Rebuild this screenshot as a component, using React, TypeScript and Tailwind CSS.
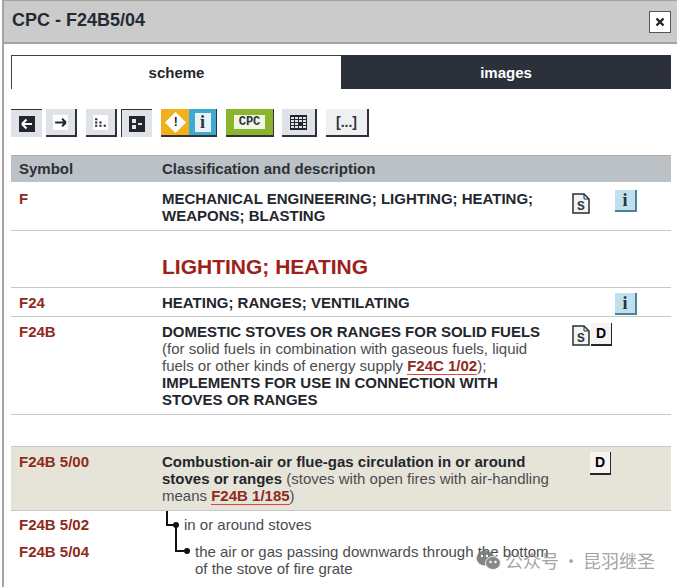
import type { ReactNode } from "react";

const Tool = ({ pressed = "", className = "", children }: { pressed?: string; className?: string; children: ReactNode }) => (
  <div className={`flex h-7 items-center justify-center bg-[#dfe2e6] ${pressed || "border-r-2 border-b-2 border-[#30343a]"} ${className}`}>
    {children}
  </div>
);

const SIcon = () => (
  <svg width="18" height="21" viewBox="0 0 18 21" className="block">
    <path d="M1 1H12L17 6V20H1Z" fill="#f2f5f5" stroke="#2b2f33" strokeWidth="1.5" />
    <path d="M12 1V6H17" fill="none" stroke="#2b2f33" />
    <text x="9" y="16.5" textAnchor="middle" fontSize="13" fontWeight="700" fill="#30343a" fontFamily="Liberation Mono, monospace">S</text>
  </svg>
);

const InfoIcon = () => (
  <div className="flex h-[22px] w-[22px] items-center justify-center border-r-2 border-b-2 border-[#4a8296] bg-[#bfe0ec] font-['Liberation_Serif',serif] text-[18px] leading-none font-bold text-[#23343f]">
    i
  </div>
);

const DIcon = () => (
  <div className="flex h-[23px] w-[21px] items-center justify-center border-r border-b-2 border-[#24272b] bg-[#f7f3f3] text-[14px] font-bold text-black">
    D
  </div>
);

const Code = ({ children }: { children: ReactNode }) => (
  <span className="border-b border-[#d9473a] font-bold text-[#8f2a20]">{children}</span>
);

const Row = ({ symbol, icons, className = "", children }: { symbol?: string; icons?: ReactNode; className?: string; children: ReactNode }) => (
  <div className={`relative flex border-b border-[#c6c8ca] ${className}`}>
    <div className="w-[151px] shrink-0 pl-2 font-bold text-[#8f2a20]">{symbol}</div>
    <div className="w-[410px] shrink-0">{children}</div>
    {icons}
  </div>
);

export default function App() {
  return (
    <div className="relative h-[587px] w-[677px] overflow-hidden bg-white font-['Liberation_Sans',sans-serif] text-[15px] leading-[17px] text-[#4a4d50]">
      <div className="ml-[2px] h-full border-t border-l-2 border-[#a3a3a3]">
        <div className="flex h-[43px] items-center justify-between border-b-2 border-[#a3a3a3] bg-[#cbcbcb] pr-[6px] pl-2">
          <h1 className="-mt-[2px] text-[18px] font-bold text-[#232a33]">CPC - F24B5/04</h1>
          <button className="flex h-[22px] w-[22px] items-center justify-center border border-[#555] bg-white">
            <svg width="10" height="10" viewBox="0 0 10 10">
              <path d="M1.5 1.5L8.5 8.5M8.5 1.5L1.5 8.5" stroke="#222" strokeWidth="2.4" />
            </svg>
          </button>
        </div>

        <div className="pt-[11px] pr-[2px] pl-[7px]">
          <div className="flex h-[34px] w-[660px] font-bold">
            <div className="flex w-[330px] items-center justify-center border-t border-l border-[#3b3f46] text-[#23272d]">scheme</div>
            <div className="flex w-[330px] items-center justify-center bg-[#2b303a] text-white">images</div>
          </div>

          <div className="mt-5 flex h-7 items-start">
            <Tool pressed="border-t border-[#30343a]" className="w-[31px]">
              <svg width="16" height="16" viewBox="0 0 16 16">
                <rect width="16" height="16" fill="#23272d" />
                <path d="M3 8H13M3 8L7.5 3.5M3 8L7.5 12.5" stroke="#fff" strokeWidth="2.2" fill="none" />
              </svg>
            </Tool>
            <Tool className="ml-1 w-[31px]">
              <svg width="15" height="15" viewBox="0 0 14 14" className="bg-white">
                <path d="M2 7H12M12 7L8.5 3.5M12 7L8.5 10.5" stroke="#23272d" strokeWidth="2" fill="none" />
              </svg>
            </Tool>
            <Tool className="ml-[9px] w-[31px]">
              <svg width="15" height="15" viewBox="0 0 14 14" className="bg-white">
                <path d="M2 3h2v2H2zM2 6h2v2H2zM2 9h2v2H2zM6 6h2v2H6zM6 9h2v2H6zM10 9h2v2h-2z" fill="#23272d" />
              </svg>
            </Tool>
            <Tool pressed="border-t border-l border-[#30343a]" className="ml-1 w-[31px]">
              <svg width="16" height="16" viewBox="0 0 16 16">
                <rect width="16" height="16" fill="#23272d" />
                <path d="M3 3h4v4H3zM3 9h4v4H3zM9 7h4v2H9z" fill="#e4e6e9" />
              </svg>
            </Tool>
            <div className="ml-[9px] flex h-7 w-14 border-r border-b-2 border-[#30343a]">
              <div className="flex w-[28px] items-center justify-center bg-[#f2b01e]">
                <div className="flex h-[15px] w-[15px] rotate-45 items-center justify-center bg-white">
                  <span className="-rotate-45 text-[12px] font-bold text-[#23272d]">!</span>
                </div>
              </div>
              <div className="flex flex-1 items-center justify-center bg-[#3fa9d0]">
                <span className="flex h-[19px] w-[16px] items-center justify-center bg-[#e8f3f7] font-['Liberation_Serif',serif] text-[18px] font-bold text-[#23343f]">i</span>
              </div>
            </div>
            <div className="ml-[9px] flex h-7 w-12 items-center justify-center border-r border-b-2 border-[#30343a] bg-[#8ab52c]">
              <span className="bg-[#f1f6e4] px-[5px] font-['Liberation_Mono',monospace] text-[12px] leading-[14px] font-bold text-[#30343a]">CPC</span>
            </div>
            <Tool className="ml-2 w-[35px]">
              <svg width="17" height="15" viewBox="0 0 17 15" className="bg-[#23272d]">
                <path d="M1 2h3v2H1zM5 2h3v2H5zM9 2h3v2H9zM13 2h3v2h-3zM1 5h3v2H1zM5 5h3v2H5zM9 5h3v2H9zM13 5h3v2h-3zM1 8h3v2H1zM5 8h3v2H5zM13 8h3v2h-3zM1 11h3v2H1zM5 11h3v2H5zM9 11h3v2H9zM13 11h3v2h-3z" fill="#dfe2e6" />
              </svg>
            </Tool>
            <Tool className="ml-[9px] w-[43px] bg-[#eef0f1]">
              <span className="text-[14px] font-bold text-[#30343a]">[...]</span>
            </Tool>
          </div>

          <div className="mt-[18px] w-[660px]">
            <div className="flex h-[27px] items-center border-t border-[#a9adb0] bg-[#bcc1c5] pb-[2px] font-bold text-[#2b3138]">
              <div className="w-[151px] pl-2">Symbol</div>
              <div>Classification and description</div>
            </div>

            <Row
              symbol="F"
              className="h-[49px] pt-[8px]"
              icons={
                <div className="flex items-start gap-[25px]">
                  <div className="mt-[3px]"><SIcon /></div>
                  <InfoIcon />
                </div>
              }
            >
              <p className="font-bold text-[#23272d]">MECHANICAL ENGINEERING; LIGHTING; HEATING; WEAPONS; BLASTING</p>
            </Row>

            <Row className="h-[57px] pt-[24px]">
              <p className="text-[21px] leading-[24px] font-bold text-[#9e2018]">LIGHTING; HEATING</p>
            </Row>

            <Row
              symbol="F24"
              className="h-[29px] pt-[6px]"
              icons={
                <div className="-mt-[1px] ml-[43px]">
                  <InfoIcon />
                </div>
              }
            >
              <p className="font-bold text-[#23272d]">HEATING; RANGES; VENTILATING</p>
            </Row>

            <Row
              symbol="F24B"
              className="h-[98px] pt-[6px]"
              icons={
                <div className="flex items-start gap-px">
                  <div className="mt-[2px]"><SIcon /></div>
                  <DIcon />
                </div>
              }
            >
              <p className="w-[395px]">
                <b className="text-[#23272d]">DOMESTIC STOVES OR RANGES FOR SOLID FUELS</b> (for solid fuels in combination with gaseous fuels, liquid fuels or other kinds of energy supply <Code>F24C 1/02</Code>); <b className="text-[#23272d]">IMPLEMENTS FOR USE IN CONNECTION WITH STOVES OR RANGES</b>
              </p>
            </Row>

            <div className="h-[31px]" />

            <Row
              symbol="F24B 5/00"
              className="h-[65px] border-t bg-[#e6e4d8] pt-[6px]"
              icons={
                <div className="-mt-px ml-[18px]">
                  <DIcon />
                </div>
              }
            >
              <p className="w-[395px]">
                <b className="text-[#23272d]">Combustion-air or flue-gas circulation in or around stoves or ranges</b> (stoves with open fires with air-handling means <Code>F24B 1/185</Code>)
              </p>
            </Row>

            <div className="flex">
              <div className="w-[151px] shrink-0 pl-2 leading-[27px] font-bold text-[#8f2a20]">
                <div>F24B 5/02</div>
                <div>F24B 5/04</div>
              </div>
              <div className="relative w-[410px] shrink-0 pt-[5px]">
                <span className="absolute top-0 left-[4px] h-[15px] w-[10px] border-b-2 border-l-2 border-[#111]" />
                <span className="absolute top-[14px] left-[13px] h-[27px] w-[9px] border-b-2 border-l-2 border-[#111]" />
                <span className="absolute top-[11px] left-[11px] h-[6px] w-[6px] rounded-full bg-[#111]" />
                <span className="absolute top-[37px] left-[22px] h-[6px] w-[6px] rounded-full bg-[#111]" />
                <p className="pl-[22px]">in or around stoves</p>
                <p className="mt-[10px] w-[395px] pl-[33px]">the air or gas passing downwards through the bottom of the stove of fire grate</p>
              </div>
            </div>
          </div>
        </div>
      </div>

      <div className="absolute top-[547px] left-[476px] flex items-center font-['Noto_Sans_CJK_SC',sans-serif] text-[18px] leading-[26px] text-[#8d8d8d]/80">
        <svg width="25" height="20" viewBox="0 0 25 20">
          <ellipse cx="9" cy="8" rx="8.5" ry="7.5" fill="#777" opacity="0.9" />
          <ellipse cx="17" cy="13" rx="7.5" ry="6.5" fill="#888" stroke="#fff" strokeWidth="0.8" />
          <circle cx="14.5" cy="12" r="1.2" fill="#fff" />
          <circle cx="19.5" cy="12" r="1.2" fill="#fff" />
          <circle cx="6" cy="6" r="1.2" fill="#fff" />
          <circle cx="11" cy="6" r="1.2" fill="#fff" />
        </svg>
        <span className="ml-[4px]">公众号</span>
        <span className="w-[24px] text-center">·</span>
        <span>昆羽继圣</span>
      </div>
    </div>
  );
}
